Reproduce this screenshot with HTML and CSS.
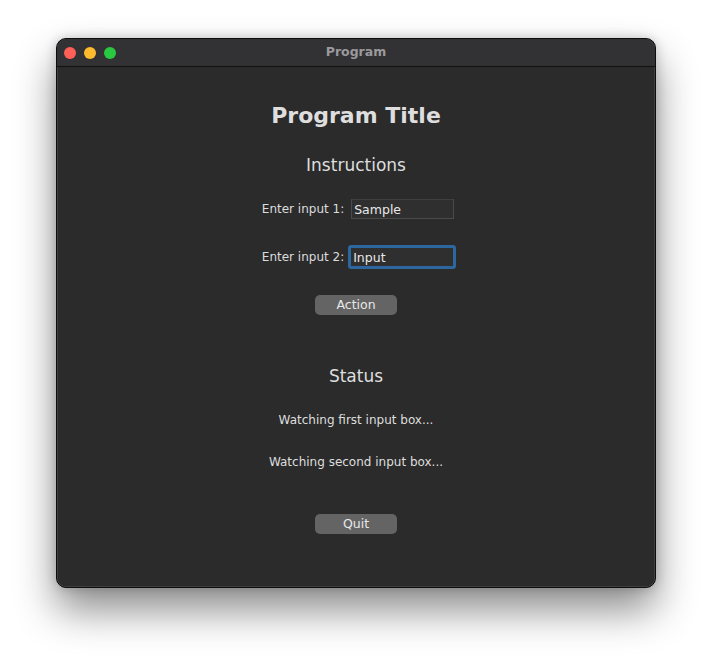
FILE: index.html
```html
<!DOCTYPE html>
<html>
<head>
<meta charset="utf-8">
<link rel="stylesheet" href="styles.css">
</head>
<body>
<div class="window">
  <div class="titlebar">
    <div class="lights">
      <span class="light red"></span>
      <span class="light yellow"></span>
      <span class="light green"></span>
    </div>
    <div class="wtitle">Program</div>
  </div>
  <div class="content">
    <h1 class="title">Program Title</h1>
    <h2 class="heading">Instructions</h2>
    <div class="row row1">
      <label class="label">Enter input 1:</label>
      <div class="field">Sample</div>
    </div>
    <div class="row row2">
      <label class="label">Enter input 2:</label>
      <div class="field focused">Input</div>
    </div>
    <button class="btn action">Action</button>
    <h2 class="heading status">Status</h2>
    <p class="msg m1">Watching first input box...</p>
    <p class="msg m2">Watching second input box...</p>
    <button class="btn quit">Quit</button>
  </div>
</div>
</body>
</html>
```
FILE: styles.css
```css
html, body {
  margin: 0;
  padding: 0;
  background: #ffffff;
  width: 712px;
  height: 662px;
  overflow: hidden;
  font-family: "DejaVu Sans", "Noto Sans", sans-serif;
}
.window {
  margin: 38px 0 0 56px;
  width: 600px;
  height: 550px;
  box-sizing: border-box;
  border-radius: 10px;
  background: #2b2b2b;
  border: 1px solid #0d0d0d;
  box-shadow: 0 0 0 0.5px #555 inset, 0 22px 40px rgba(0,0,0,0.45), 0 0 12px rgba(0,0,0,0.2);
  overflow: hidden;
  display: flex;
  flex-direction: column;
}
.titlebar {
  height: 27px;
  background: #323134;
  border-bottom: 1px solid #111;
  display: flex;
  align-items: center;
  position: relative;
  flex-shrink: 0;
}
.lights {
  display: flex;
  gap: 8px;
  padding-left: 7px;
}
.light {
  width: 12px;
  height: 12px;
  border-radius: 50%;
  display: block;
}
.red { background: #fe5f57; }
.yellow { background: #febb2e; }
.green { background: #29c840; }
.wtitle {
  position: absolute;
  left: 0;
  right: 0;
  top: 0;
  line-height: 26px;
  text-align: center;
  color: #9a999c;
  font-weight: bold;
  font-size: 12.5px;
}
.content {
  display: flex;
  flex-direction: column;
  align-items: center;
  color: #e4e4e4;
}
.title {
  margin: 34px 0 0 0;
  font-size: 22px;
  font-weight: bold;
  line-height: 30px;
  color: #dedede;
}
.heading {
  margin: 23px 0 0 0;
  font-size: 17px;
  font-weight: normal;
  line-height: 22px;
  color: #dedede;
}
.row {
  display: flex;
  align-items: center;
  gap: 7px;
  margin-left: 4px;
}
.row1 { margin-top: 23px; }
.row2 { margin-top: 26px; }
.label {
  font-size: 12px;
  color: #dcdcdc;
}
.field {
  width: 103px;
  height: 20px;
  box-sizing: border-box;
  background: #2f2f2f;
  border: 1px solid #4a4a4a;
  border-top-color: #3f3f3f;
  font-size: 12.5px;
  line-height: 19px;
  padding-left: 2px;
  color: #e8e8e8;
}
.focused {
  width: 108px;
  height: 24px;
  margin-left: -3px;
  margin-right: -2px;
  border: 3px solid #2c67a0;
  border-radius: 3px;
  line-height: 19px;
  padding-left: 2px;
}
.btn {
  width: 82px;
  height: 20px;
  border: none;
  border-radius: 5px;
  background: #646464;
  color: #e8e8e8;
  font-family: inherit;
  font-size: 12.5px;
  padding: 0;
  line-height: 20px;
}
.action { margin-top: 26px; }
.status { margin-top: 50px; }
.msg {
  margin: 0;
  font-size: 12px;
  line-height: 16px;
  color: #dedede;
}
.m1 { margin-top: 25px; }
.m2 { margin-top: 26px; }
.quit { margin-top: 44px; }
```
